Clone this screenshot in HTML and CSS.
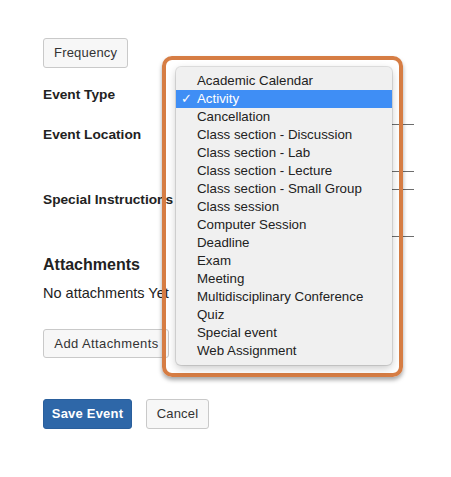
FILE: index.html
```html
<!DOCTYPE html>
<html>
<head>
<meta charset="utf-8">
<link rel="stylesheet" href="styles.css">
</head>
<body>
<div class="page">
  <button class="btn btn-freq">Frequency</button>
  <div class="label label-type">Event Type</div>
  <div class="row row-location">
    <div class="label">Event Location</div>
    <div class="field field-location"></div>
  </div>
  <div class="row row-special">
    <div class="label">Special Instructions</div>
    <div class="field field-special"></div>
  </div>
  <h2 class="heading">Attachments</h2>
  <p class="note">No attachments Yet</p>
  <button class="btn btn-add">Add Attachments</button>
  <div class="actions">
    <button class="btn btn-primary">Save Event</button>
    <button class="btn btn-cancel">Cancel</button>
  </div>
</div>

<div class="highlight-frame"></div>
<ul class="menu">
  <li>Academic Calendar</li>
  <li class="selected"><span class="check">✓</span>Activity</li>
  <li>Cancellation</li>
  <li>Class section - Discussion</li>
  <li>Class section - Lab</li>
  <li>Class section - Lecture</li>
  <li>Class section - Small Group</li>
  <li>Class session</li>
  <li>Computer Session</li>
  <li>Deadline</li>
  <li>Exam</li>
  <li>Meeting</li>
  <li>Multidisciplinary Conference</li>
  <li>Quiz</li>
  <li>Special event</li>
  <li>Web Assignment</li>
</ul>
</body>
</html>
```

FILE: styles.css
```css
* { box-sizing: border-box; }
html, body { margin: 0; padding: 0; background: #fff; }
body {
  font-family: "Liberation Sans", Arial, Helvetica, sans-serif;
  color: #222;
  width: 451px;
  height: 477px;
  overflow: hidden;
  position: relative;
}
.page {
  padding: 38px 37px 0 43px;
  display: flex;
  flex-direction: column;
  align-items: flex-start;
}
.btn {
  font-family: "Liberation Sans", Arial, Helvetica, sans-serif;
  font-size: 13px;
  color: #333;
  background: #f7f7f7;
  border: 1px solid #c9c9c9;
  border-radius: 3px;
  height: 30px;
  padding: 0 10px;
  letter-spacing: 0.2px;
  line-height: 28px;
}
.btn-freq { width: 85px; }
.label {
  font-size: 13.7px;
  font-weight: bold;
  line-height: 20px;
  white-space: nowrap;
}
.label-type { margin-top: 17px; }
.row {
  display: flex;
  align-items: flex-start;
  width: 100%;
}
.row .label {
  width: 157px;
  flex: none;
  padding-top: 1px;
}
.row-location { margin-top: 19px; }
.row-special { margin-top: 17px; }
.field {
  flex: 1;
  border-top: 1px solid #6d6d6d;
  border-bottom: 1px solid #6d6d6d;
}
.field-location { height: 48px; }
.field-special { height: 48px; }
.heading {
  margin: 17px 0 0;
  font-size: 16px;
  font-weight: bold;
  line-height: 22px;
}
.note {
  margin: 7px 0 0;
  font-size: 14.5px;
  line-height: 20px;
  white-space: nowrap;
}
.btn-add {
  margin-top: 26px;
  width: 126px;
  height: 29px;
  line-height: 27px;
  padding: 0 0 0 1px;
  letter-spacing: 0.4px;
}
.actions {
  margin-top: 41px;
  display: flex;
  gap: 14px;
}
.btn-primary {
  background: #2e67a8;
  border-color: #2a5f9c;
  color: #fff;
  font-weight: bold;
  width: 89px;
  padding: 0;
}
.btn-cancel {
  width: 63px;
  padding: 0;
}
.highlight-frame {
  position: absolute;
  left: 162px;
  top: 56px;
  width: 241px;
  height: 321px;
  border: 4.5px solid #d67d44;
  border-radius: 10px;
  box-shadow: 0 3px 4px rgba(0,0,0,0.35);
}
.menu {
  position: absolute;
  left: 176px;
  top: 67px;
  width: 216px;
  height: 298px;
  margin: 0;
  padding: 5px 0 3px;
  list-style: none;
  background: #f0f0f0;
  border-radius: 5px;
  box-shadow: 0 0 0 1px rgba(0,0,0,0.1), 0 3px 8px rgba(0,0,0,0.22);
}
.menu li {
  position: relative;
  height: 18px;
  line-height: 18px;
  padding-left: 21px;
  font-size: 13.3px;
  color: #222;
  white-space: nowrap;
}
.menu li.selected {
  background: #3f8ef5;
  color: #fff;
}
.check {
  position: absolute;
  left: 5px;
  top: 0;
  font-size: 13px;
  font-weight: bold;
  font-family: "DejaVu Sans", sans-serif;
}
```
